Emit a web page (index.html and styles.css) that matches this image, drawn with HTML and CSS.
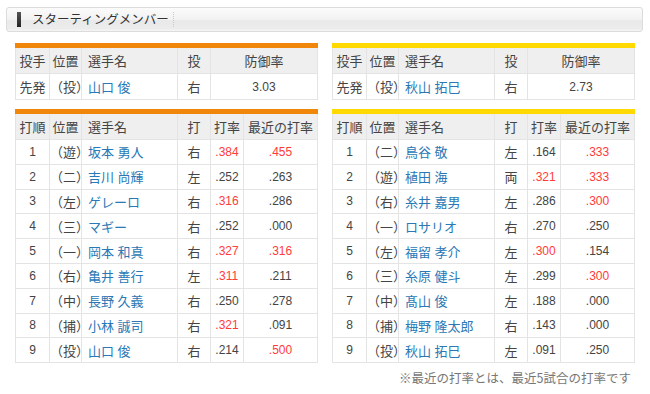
FILE: index.html
```html
<!DOCTYPE html>
<html lang="ja">
<head>
<meta charset="utf-8">
<title>スターティングメンバー</title>
<link rel="stylesheet" href="styles.css">
</head>
<body>
<div class="page">
  <div class="title-bar">
    <span class="title-mark"></span>
    <h2 class="title">スターティングメンバー</h2>
    <span class="title-sep"></span>
  </div>

  <div class="teams">
    <div class="team team-giants">
      <table class="stats pitcher">
        <colgroup><col class="c1"><col class="c2"><col class="c3"><col class="c4"><col class="c5w"></colgroup>
        <tr><th>投手</th><th>位置</th><th class="name">選手名</th><th>投</th><th>防御率</th></tr>
        <tr><td>先発</td><td>（投）</td><td class="name">山口 俊</td><td>右</td><td class="num">3.03</td></tr>
      </table>
      <table class="stats lineup">
        <colgroup><col class="c1"><col class="c2"><col class="c3"><col class="c4"><col class="c5"><col class="c6"></colgroup>
        <tr><th>打順</th><th>位置</th><th class="name">選手名</th><th>打</th><th>打率</th><th>最近の打率</th></tr>
        <tr><td class="num">1</td><td>（遊）</td><td class="name">坂本 勇人</td><td>右</td><td class="num hot">.384</td><td class="num hot">.455</td></tr>
        <tr><td class="num">2</td><td>（二）</td><td class="name">吉川 尚輝</td><td>左</td><td class="num">.252</td><td class="num">.263</td></tr>
        <tr><td class="num">3</td><td>（左）</td><td class="name">ゲレーロ</td><td>右</td><td class="num hot">.316</td><td class="num">.286</td></tr>
        <tr><td class="num">4</td><td>（三）</td><td class="name">マギー</td><td>右</td><td class="num">.252</td><td class="num">.000</td></tr>
        <tr><td class="num">5</td><td>（一）</td><td class="name">岡本 和真</td><td>右</td><td class="num hot">.327</td><td class="num hot">.316</td></tr>
        <tr><td class="num">6</td><td>（右）</td><td class="name">亀井 善行</td><td>左</td><td class="num hot">.311</td><td class="num">.211</td></tr>
        <tr><td class="num">7</td><td>（中）</td><td class="name">長野 久義</td><td>右</td><td class="num">.250</td><td class="num">.278</td></tr>
        <tr><td class="num">8</td><td>（捕）</td><td class="name">小林 誠司</td><td>右</td><td class="num hot">.321</td><td class="num">.091</td></tr>
        <tr><td class="num">9</td><td>（投）</td><td class="name">山口 俊</td><td>右</td><td class="num">.214</td><td class="num hot">.500</td></tr>
      </table>
    </div>

    <div class="team team-tigers">
      <table class="stats pitcher">
        <colgroup><col class="c1"><col class="c2"><col class="c3"><col class="c4"><col class="c5w"></colgroup>
        <tr><th>投手</th><th>位置</th><th class="name">選手名</th><th>投</th><th>防御率</th></tr>
        <tr><td>先発</td><td>（投）</td><td class="name">秋山 拓巳</td><td>右</td><td class="num">2.73</td></tr>
      </table>
      <table class="stats lineup">
        <colgroup><col class="c1"><col class="c2"><col class="c3"><col class="c4"><col class="c5"><col class="c6"></colgroup>
        <tr><th>打順</th><th>位置</th><th class="name">選手名</th><th>打</th><th>打率</th><th>最近の打率</th></tr>
        <tr><td class="num">1</td><td>（二）</td><td class="name">鳥谷 敬</td><td>左</td><td class="num">.164</td><td class="num hot">.333</td></tr>
        <tr><td class="num">2</td><td>（遊）</td><td class="name">植田 海</td><td>両</td><td class="num hot">.321</td><td class="num hot">.333</td></tr>
        <tr><td class="num">3</td><td>（右）</td><td class="name">糸井 嘉男</td><td>左</td><td class="num">.286</td><td class="num hot">.300</td></tr>
        <tr><td class="num">4</td><td>（一）</td><td class="name">ロサリオ</td><td>右</td><td class="num">.270</td><td class="num">.250</td></tr>
        <tr><td class="num">5</td><td>（左）</td><td class="name">福留 孝介</td><td>左</td><td class="num hot">.300</td><td class="num">.154</td></tr>
        <tr><td class="num">6</td><td>（三）</td><td class="name">糸原 健斗</td><td>左</td><td class="num">.299</td><td class="num hot">.300</td></tr>
        <tr><td class="num">7</td><td>（中）</td><td class="name">髙山 俊</td><td>左</td><td class="num">.188</td><td class="num">.000</td></tr>
        <tr><td class="num">8</td><td>（捕）</td><td class="name">梅野 隆太郎</td><td>右</td><td class="num">.143</td><td class="num">.000</td></tr>
        <tr><td class="num">9</td><td>（投）</td><td class="name">秋山 拓巳</td><td>左</td><td class="num">.091</td><td class="num">.250</td></tr>
      </table>
    </div>
  </div>

  <p class="note">※最近の打率とは、最近5試合の打率です</p>
</div>
</body>
</html>
```

FILE: styles.css
```css
html, body {
  margin: 0;
  padding: 0;
  background: #ffffff;
}

body {
  font-family: "Liberation Sans", "Noto Sans CJK JP", sans-serif;
  color: #333333;
}

.page {
  padding: 7px 7px 0 6px;
}

.title-bar {
  display: flex;
  align-items: center;
  height: 25px;
  box-sizing: border-box;
  border: 1px solid #dcdcdc;
  border-radius: 3px;
  padding-left: 10px;
  background: linear-gradient(to bottom, #fbfbfb 0%, #f2f2f2 50%, #e9e9e9 52%, #ececec 90%, #f6f6f6 100%);
}

.title-mark {
  width: 4px;
  height: 15px;
  background: linear-gradient(to bottom, #555555, #222222);
}

.title {
  margin: 0 0 0 11px;
  font-size: 12.5px;
  font-weight: normal;
  color: #333333;
  font-family: "Noto Sans CJK JP", sans-serif;
  line-height: 1;
}

.title-sep {
  width: 0;
  height: 15px;
  margin-left: 4px;
  border-left: 1px dotted #c8c8c8;
}

.teams {
  display: flex;
  gap: 15px;
  margin-top: 11px;
  padding-left: 9px;
}

.team {
  width: 302px;
}

.stats {
  width: 302px;
  table-layout: fixed;
  border-collapse: collapse;
  font-size: 13px;
}

.team-giants .stats {
  border-top: 5px solid #f0870a;
}

.team-tigers .stats {
  border-top: 5px solid #ffd900;
}

.lineup {
  margin-top: 9px;
}

.c1 { width: 34px; }
.c2 { width: 32px; }
.c3 { width: 96px; }
.c4 { width: 33px; }
.c5 { width: 33px; }
.c5w { width: 107px; }
.c6 { width: 74px; }

.stats th,
.stats td {
  border: 1px solid #e4e4e4;
  padding: 0;
  text-align: center;
  white-space: nowrap;
  overflow: visible;
  font-weight: normal;
  color: #444444;
}

.stats th {
  height: 25px;
  background: #efefef;
  color: #444444;
}

.pitcher td {
  height: 25px;
}

.lineup td {
  height: 23.8px;
}

.stats .name {
  text-align: left;
  padding-left: 6px;
}

.stats td.name {
  color: #2a78b5;
}

.stats td.num {
  font-size: 12px;
  color: #444444;
}

.stats td.hot {
  color: #ff3b3b;
}

.note {
  margin: 5px 0 0;
  padding-right: 12px;
  text-align: right;
  font-size: 12.5px;
  color: #777777;
  font-family: "Noto Sans CJK JP", sans-serif;
}
```
